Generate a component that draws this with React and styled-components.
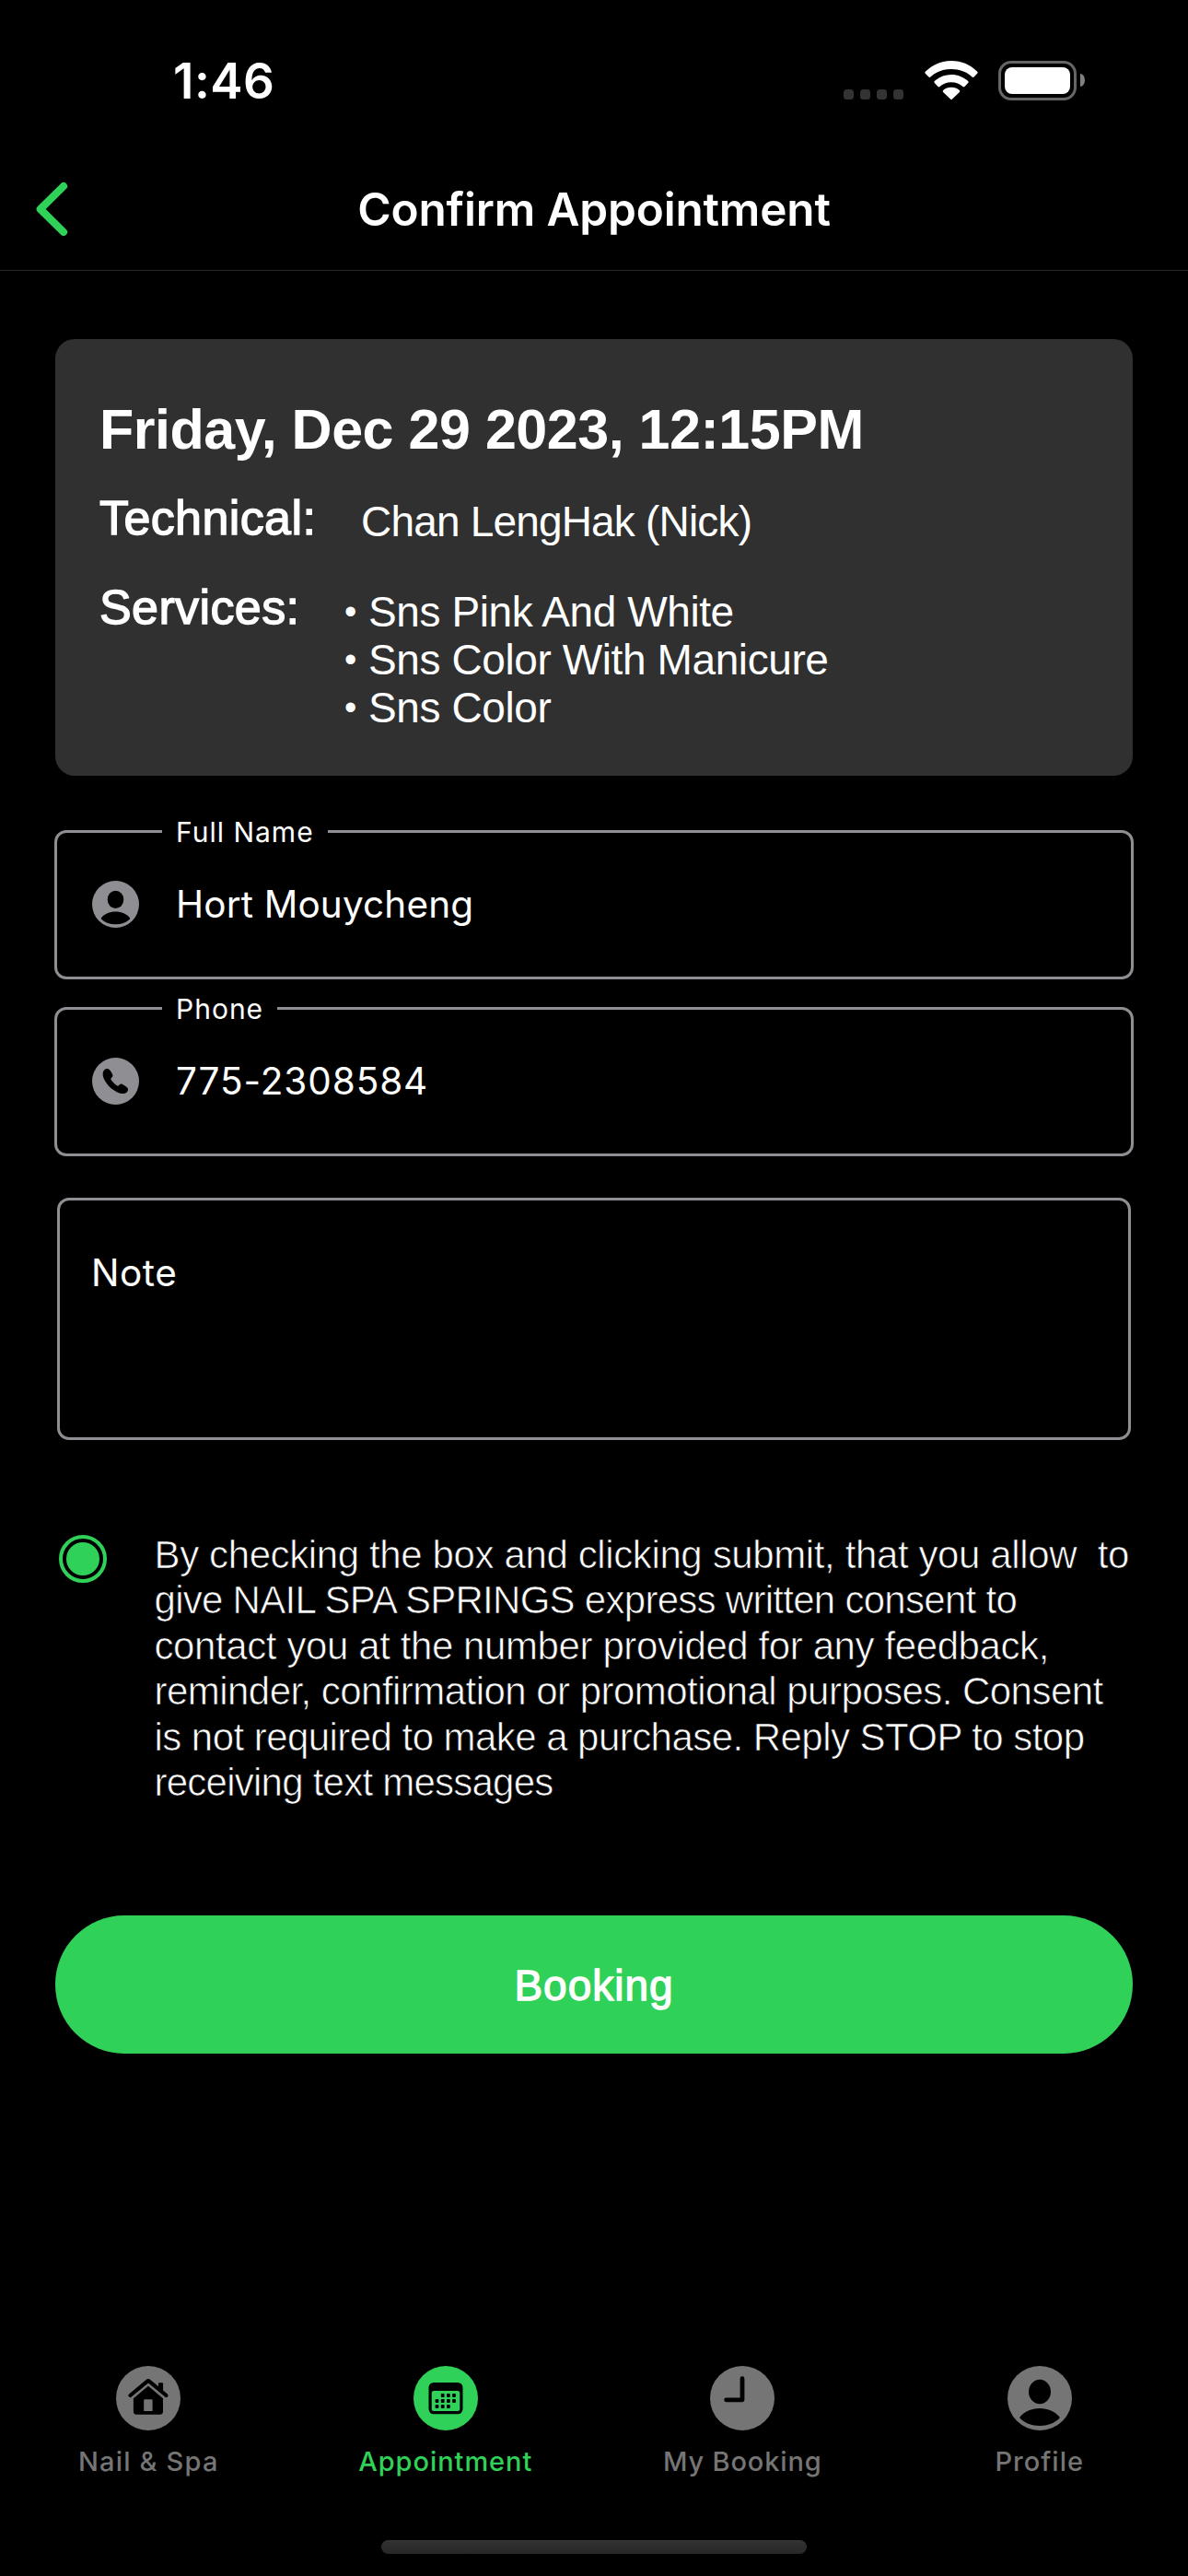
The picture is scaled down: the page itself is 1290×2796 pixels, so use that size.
import React from "react";
import styled, { createGlobalStyle } from "styled-components";

const GREEN = "#30d158";
const GREY = "#8e8e93";
const TAB_GREY = "#757575";
const SYSTEM = `Inter, "Liberation Sans", sans-serif`;
const HELVETICA = `"Liberation Sans", Roboto, sans-serif`;

const GlobalStyle = createGlobalStyle`
  * { box-sizing: border-box; }
  html, body { margin: 0; padding: 0; background: #000; }
`;

const Screen = styled.div`
  display: flex;
  flex-direction: column;
  width: 1290px;
  height: 2796px;
  background: #000;
  color: #fff;
  overflow: hidden;
  font-family: ${SYSTEM};
`;

/* Status bar */
const StatusBar = styled.header`
  display: flex;
  align-items: center;
  justify-content: space-between;
  height: 160px;
  padding: 16px 112px 0 188px;
`;

const Time = styled.span`
  font-size: 53px;
  font-weight: 600;
  line-height: 60px;
  letter-spacing: 0.5px;
`;

const StatusIcons = styled.div`
  display: flex;
  align-items: flex-end;
  padding-bottom: 2px;
`;

const Dots = styled.div`
  display: flex;
  gap: 7px;
  margin: 0 23px 1px 0;
`;

const Dot = styled.i`
  width: 11px;
  height: 11px;
  border-radius: 3.5px;
  background: #333;
`;

const WifiSvg = styled.svg`
  width: 58px;
  height: 42px;
  margin: 0 22px 1px 0;
`;

const Battery = styled.div`
  width: 85px;
  height: 43px;
  padding: 4px;
  border: 3px solid #666;
  border-radius: 14px;
`;

const BatteryLevel = styled.div`
  height: 100%;
  border-radius: 8px;
  background: #fff;
`;

const BatteryNub = styled.div`
  align-self: center;
  width: 5px;
  height: 14px;
  margin-left: 4px;
  border-radius: 0 5px 5px 0 / 0 7px 7px 0;
  background: #808080;
`;

/* Navigation header */
const NavHeader = styled.nav`
  display: grid;
  grid-template-columns: 120px 1fr 120px;
  align-items: center;
  height: 134px;
  border-bottom: 1px solid #272729;
`;

const BackButton = styled.button`
  display: flex;
  margin: 0;
  padding: 0 0 0 36px;
  border: 0;
  background: none;
`;

const Title = styled.h1`
  margin: 0;
  text-align: center;
  font-size: 49.5px;
  font-weight: 600;
  line-height: 60px;
  letter-spacing: -0.17px;
`;

/* Body */
const Content = styled.main`
  display: flex;
  flex-direction: column;
  padding: 74px 60px 0;
`;

const Card = styled.section`
  height: 474px;
  padding: 62px 47px 0 48px;
  border-radius: 21px;
  background: #303030;
  font-family: ${HELVETICA};
`;

const CardDate = styled.h2`
  margin: 0 0 30px;
  font-size: 61px;
  font-weight: 700;
  line-height: 72px;
  letter-spacing: -0.48px;
  white-space: nowrap;
`;

const DetailRow = styled.div`
  display: flex;
  align-items: flex-start;
  & + & { margin-top: 37px; }
`;

const DetailLabel = styled.span`
  flex: none;
  width: ${(p) => p.$width}px;
  font-size: 52px;
  line-height: 60px;
  letter-spacing: 0.4px;
  -webkit-text-stroke: 1.4px #fff;
`;

const DetailValue = styled.span`
  padding-top: 8px;
  font-size: 46px;
  line-height: 52px;
  letter-spacing: -0.82px;
`;

const ServiceList = styled.ul`
  margin: 0;
  padding: 9px 0 0;
  list-style: none;
`;

const Service = styled.li`
  display: flex;
  font-size: 46px;
  line-height: 52px;
  letter-spacing: -0.4px;
`;

const Bullet = styled.span`
  width: 26px;
  font-size: 38px;
`;

const Field = styled.div`
  position: relative;
  display: flex;
  align-items: center;
  gap: 40px;
  height: 162px;
  margin: ${(p) => p.$gap}px -1px 0;
  padding: 0 0 1px 38px;
  border: 3px solid ${GREY};
  border-radius: 13px;
`;

const FieldLabel = styled.label`
  position: absolute;
  left: 114px;
  top: -16px;
  padding: 0 15px;
  background: #000;
  font-size: 30px;
  line-height: 30px;
  letter-spacing: 1px;
`;

const FieldValue = styled.span`
  font-size: 40.5px;
  line-height: 48px;
  letter-spacing: ${(p) => p.$tracking}px;
`;

const NoteBox = styled.div`
  height: 263px;
  margin: 45px 2px 0;
  padding: 55px 34px 0;
  border: 3px solid ${GREY};
  border-radius: 13px;
  font-size: 40.5px;
  line-height: 48px;
  letter-spacing: 0.5px;
`;

const Consent = styled.div`
  display: flex;
  align-items: flex-start;
  height: 297px;
  margin-top: 100px;
  padding-left: 4px;
`;

const Radio = styled.span`
  flex: none;
  display: grid;
  place-items: center;
  width: 52px;
  height: 52px;
  margin: 3px 51.5px 0 0;
  border: 4px solid ${GREEN};
  border-radius: 50%;
  &::after {
    content: "";
    width: 36px;
    height: 36px;
    border-radius: 50%;
    background: ${GREEN};
  }
`;

const ConsentText = styled.p`
  margin: 0;
  font-family: ${HELVETICA};
  font-size: 42px;
  line-height: 49.45px;
  white-space: pre;
`;

/* The dark outline slims the regular face down to a light weight. */
const ConsentLine = styled.span`
  display: block;
  letter-spacing: ${(p) => p.$tracking}px;
  word-spacing: ${(p) => p.$wordGap || 0}px;
  -webkit-text-stroke: 0.7px #000;
`;

const BookButton = styled.button`
  height: 150px;
  margin-top: 119px;
  padding: 2px 0 0;
  border: 0;
  border-radius: 75px;
  background: ${GREEN};
  color: #fff;
  font-family: ${HELVETICA};
  font-size: 46px;
  line-height: 60px;
  letter-spacing: 1px;
  -webkit-text-stroke: 1.3px #fff;
`;

/* Tab bar */
const TabBar = styled.footer`
  display: flex;
  flex-direction: column;
  align-items: center;
  justify-content: space-between;
  height: 228px;
  margin-top: auto;
  padding-bottom: 24px;
`;

const Tabs = styled.div`
  display: grid;
  grid-template-columns: repeat(4, 1fr);
  width: 100%;
`;

const Tab = styled.a`
  display: flex;
  flex-direction: column;
  align-items: center;
  gap: 15px;
  color: ${(p) => (p.$active ? GREEN : TAB_GREY)};
`;

const TabLabel = styled.span`
  font-size: 29px;
  font-weight: 500;
  line-height: 37px;
  letter-spacing: ${(p) => p.$tracking}px;
`;

const HomeIndicator = styled.div`
  width: 462px;
  height: 15px;
  border-radius: 8px;
  background: linear-gradient(#333, #272727);
`;

const WifiIcon = () => (
  <WifiSvg viewBox="0 0 58 42" fill="#fff">
    <path d="M29 0C18 0 8 4.400 .8 11.800c-.6.6-.6 1.400 0 2l3.600 3.700c.6.6 1.500.6 2 0C12.400 11.900 20.300 9 29 9s16.600 2.900 22.600 8.500c.6.6 1.400.6 2 0l3.600-3.700c.6-.6.6-1.400 0-2C50 4.400 40 0 29 0z" />
    <path d="M29 15c-7 0-13.400 2.700-18.200 7.100-.6.6-.6 1.400 0 2l3.700 3.900c.6.6 1.400.6 2 0 3.300-3 7.700-4.700 12.500-4.700s9.200 1.700 12.500 4.700c.6.6 1.400.6 2 0l3.700-3.900c.6-.6.6-1.400 0-2C42.400 17.700 36 15 29 15z" />
    <path d="M29 28.800c-3.400 0-6.500 1.200-8.800 3.200-.6.5-.6 1.300-.1 1.900l7.900 7.700c.6.6 1.400.6 2 0l7.900-7.700c.5-.6.5-1.400-.1-1.900-2.300-2-5.400-3.200-8.800-3.200z" />
  </WifiSvg>
);

const BackIcon = () => (
  <svg width="42" height="60" viewBox="0 0 42 60" fill="none" stroke={GREEN} strokeWidth="8.200" strokeLinecap="round" strokeLinejoin="round">
    <path d="M33 5.200 7.800 30 33 54.800" />
  </svg>
);

const PersonIcon = ({ size, color }) => (
  <svg width={size} height={size} viewBox="0 0 70 70">
    <circle cx="35" cy="35" r="35" fill={color} />
    <ellipse cx="35" cy="28" rx="12" ry="13.200" />
    <path d="M14 57.300c-.7-.8-.7-1.700 0-2.500C18.500 49.500 26 46 35 46s16.500 3.500 21 8.800c.7.800.7 1.700 0 2.500C50.500 62.300 43.500 65 35 65s-15.500-2.700-21-7.700z" />
  </svg>
);

const PhoneIcon = () => (
  <svg width="51" height="51" viewBox="0 0 51 51">
    <circle cx="25.500" cy="25.500" r="25.500" fill={GREY} />
    <path d="M13.300 13.300c1.600-1.600 4-2 5.500-.3 1.300 1.500 2.400 3.200 3.300 4.900.8 1.600.2 2.800-1.100 4-.9.800-.8 1.400-.2 2.300 1.600 2.300 3.600 4.300 6 6 .9.600 1.600.6 2.300-.2 1.200-1.300 2.400-1.900 4-1.100 1.700.9 3.400 2 4.900 3.300 1.600 1.500 1.300 3.900-.3 5.300-2.600 2.300-6.300 1.900-10 .2C20.600 34.400 15.900 29.400 13 23.300c-1.600-3.700-2-7.400.3-10z" />
  </svg>
);

const HomeIcon = () => (
  <svg width="70" height="70" viewBox="0 0 70 70">
    <circle cx="35" cy="35" r="35" fill={TAB_GREY} />
    <path d="M46 19.500c0-.8.500-1.300 1.300-1.300h2.500c.8 0 1.300.5 1.300 1.300V30L46 25.300z" />
    <path d="M15.500 32 34 16.600q1-.8 2 0L54.500 32" fill="none" stroke="#000" strokeWidth="4.200" strokeLinecap="round" strokeLinejoin="round" />
    <path fillRule="evenodd" d="M35 21.800 51 35.300V49.600q0 3.100-3.100 3.100H22q-3.100 0-3.100-3.100V35.300zM31.200 36.300q-1 0-1 1V49h9.400V37.300q0-1-1-1z" />
  </svg>
);

const CALENDAR_DOTS = [
  [31.7, 32], [37.9, 32], [44, 32],
  [25.5, 38], [31.7, 38], [37.9, 38], [44, 38],
  [25.5, 44], [31.7, 44], [37.9, 44],
];

const CalendarIcon = () => (
  <svg width="70" height="70" viewBox="0 0 70 70">
    <circle cx="35" cy="35" r="35" fill={GREEN} />
    <rect x="16.500" y="18" width="37" height="34.300" rx="5.500" />
    <rect x="19.700" y="27" width="30.600" height="22" rx="2.500" fill={GREEN} />
    {CALENDAR_DOTS.map(([x, y]) => (
      <rect key={`${x}-${y}`} x={x - 1.9} y={y - 1.9} width="3.800" height="3.800" rx="1" />
    ))}
  </svg>
);

const ClockIcon = () => (
  <svg width="70" height="70" viewBox="0 0 70 70">
    <circle cx="35" cy="35" r="35" fill={TAB_GREY} />
    <path d="M35 13.700V36.800H17.600" fill="none" stroke="#000" strokeWidth="4.800" strokeLinecap="round" strokeLinejoin="round" />
  </svg>
);

const SERVICES = ["Sns Pink And White", "Sns Color With Manicure", "Sns Color"];

const CONSENT_LINES = [
  { text: "By checking the box and clicking submit, that you allow  to", tracking: -0.38 },
  { text: "give NAIL SPA SPRINGS express written consent to", tracking: -0.72 },
  { text: "contact you at the number provided for any feedback,", tracking: -0.4 },
  { text: "reminder, confirmation or promotional purposes. Consent", tracking: -0.54 },
  { text: "is not required to make a purchase. Reply STOP to stop", tracking: -0.55 },
  { text: "receiving text messages", tracking: -0.76 },
];

const TABS = [
  { label: "Nail & Spa", tracking: 1.18, icon: <HomeIcon /> },
  { label: "Appointment", tracking: 0.95, icon: <CalendarIcon />, active: true },
  { label: "My Booking", tracking: 0.86, icon: <ClockIcon /> },
  { label: "Profile", tracking: 0.99, icon: <PersonIcon size={70} color={TAB_GREY} /> },
];

export default function App() {
  return (
    <Screen>
      <GlobalStyle />
      <StatusBar>
        <Time>1:46</Time>
        <StatusIcons>
          <Dots>
            <Dot />
            <Dot />
            <Dot />
            <Dot />
          </Dots>
          <WifiIcon />
          <Battery>
            <BatteryLevel />
          </Battery>
          <BatteryNub />
        </StatusIcons>
      </StatusBar>
      <NavHeader>
        <BackButton aria-label="Back">
          <BackIcon />
        </BackButton>
        <Title>Confirm Appointment</Title>
      </NavHeader>
      <Content>
        <Card>
          <CardDate>Friday, Dec 29 2023, 12:15PM</CardDate>
          <DetailRow>
            <DetailLabel $width={284}>Technical:</DetailLabel>
            <DetailValue>Chan LengHak (Nick)</DetailValue>
          </DetailRow>
          <DetailRow>
            <DetailLabel $width={266}>Services:</DetailLabel>
            <ServiceList>
              {SERVICES.map((name) => (
                <Service key={name}>
                  <Bullet>•</Bullet>
                  {name}
                </Service>
              ))}
            </ServiceList>
          </DetailRow>
        </Card>
        <Field $gap={59}>
          <FieldLabel>Full Name</FieldLabel>
          <PersonIcon size={51} color={GREY} />
          <FieldValue $tracking={0.15}>Hort Mouycheng</FieldValue>
        </Field>
        <Field $gap={30}>
          <FieldLabel>Phone</FieldLabel>
          <PhoneIcon />
          <FieldValue $tracking={0.9}>775-2308584</FieldValue>
        </Field>
        <NoteBox>Note</NoteBox>
        <Consent>
          <Radio />
          <ConsentText>
            {CONSENT_LINES.map(({ text, tracking }) => (
              <ConsentLine key={text} $tracking={tracking}>
                {text}
              </ConsentLine>
            ))}
          </ConsentText>
        </Consent>
        <BookButton>Booking</BookButton>
      </Content>
      <TabBar>
        <Tabs>
          {TABS.map((tab) => (
            <Tab key={tab.label} $active={tab.active}>
              {tab.icon}
              <TabLabel $tracking={tab.tracking}>{tab.label}</TabLabel>
            </Tab>
          ))}
        </Tabs>
        <HomeIndicator />
      </TabBar>
    </Screen>
  );
}
